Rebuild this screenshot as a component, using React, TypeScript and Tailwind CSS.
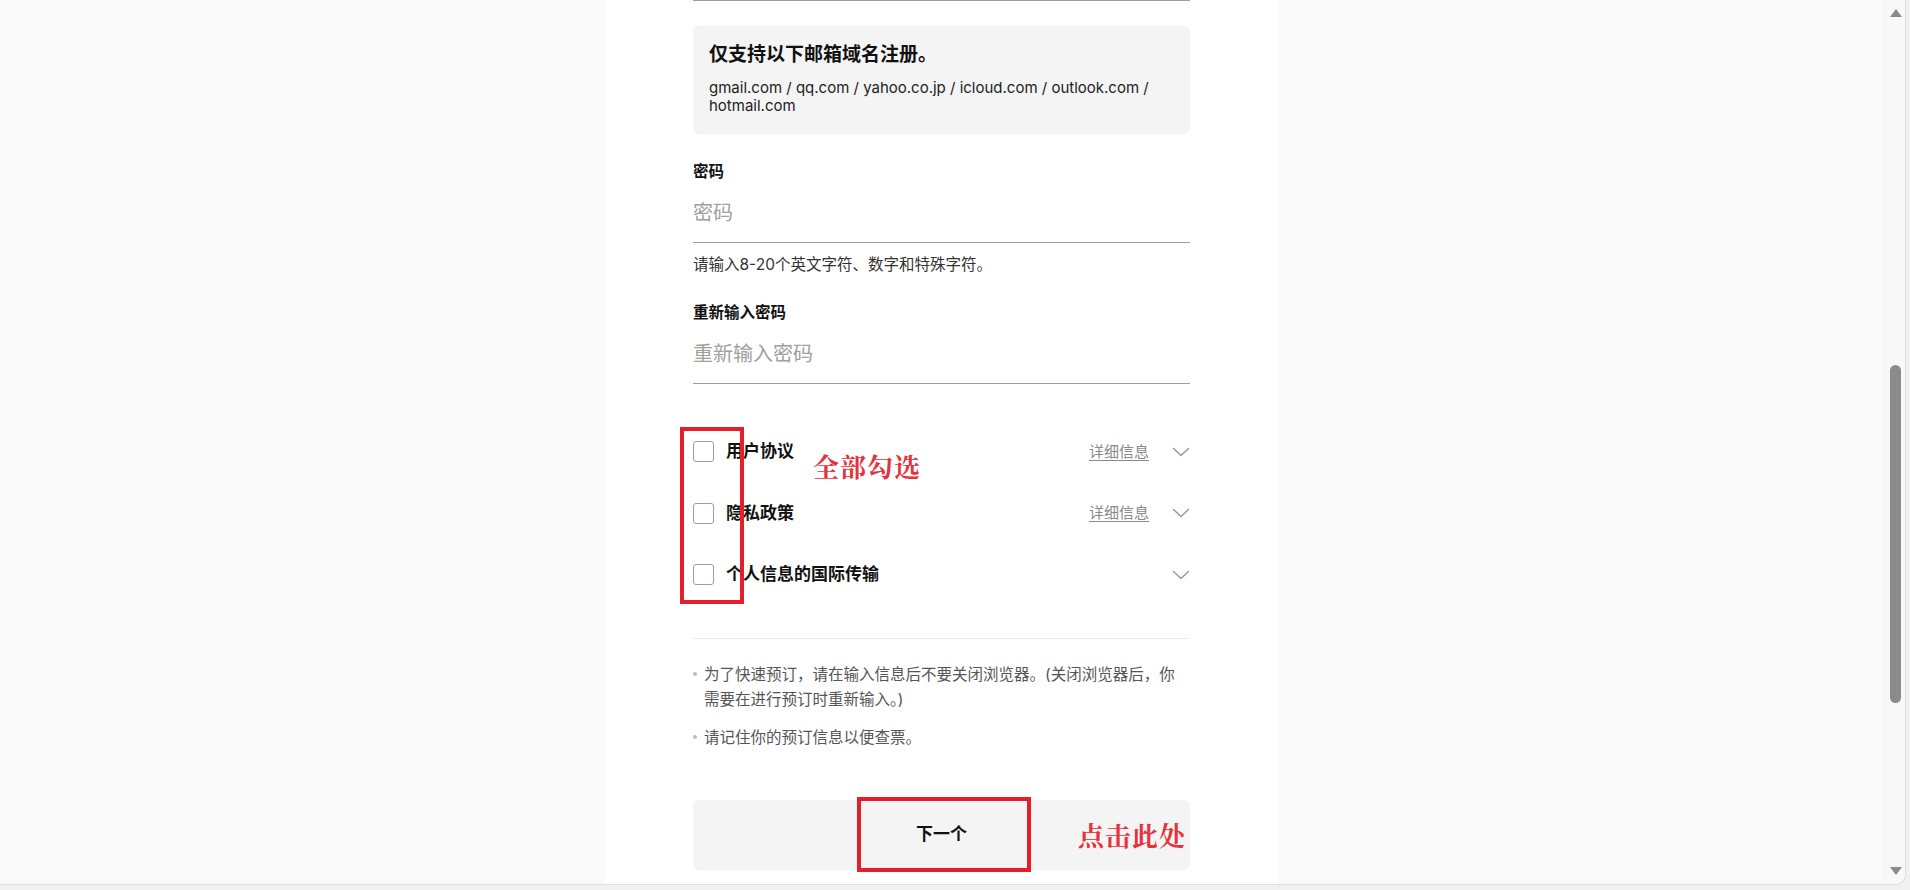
const FONT = 'font-["Inter","Noto_Sans_CJK_SC",sans-serif]'

function Chevron() {
  return (
    <svg width="18" height="10" viewBox="0 0 18 10" fill="none">
      <polyline points="1.5,1.5 9,8.5 16.5,1.5" stroke="#9a9a9a" strokeWidth="1.6" strokeLinecap="round" strokeLinejoin="round" />
    </svg>
  )
}

function AgreeRow({ label, detail }: { label: string; detail?: boolean }) {
  return (
    <div className="flex h-[61.5px] items-center">
      <span className="h-[21px] w-[21px] shrink-0 rounded-[3px] border-[1.5px] border-[#9e9e9e] bg-white" />
      <span className="ml-[12px] text-[17px] font-semibold text-[#111]">{label}</span>
      <div className="ml-auto flex items-center">
        {detail && <span className="text-[15px] text-[#8a8a8a] underline underline-offset-[3px]">详细信息</span>}
        <span className="ml-[23px]">
          <Chevron />
        </span>
      </div>
    </div>
  )
}

function PasswordField({ label, placeholder }: { label: string; placeholder: string }) {
  return (
    <div>
      <div className="text-[15.5px] font-semibold leading-[22px] text-[#111]">{label}</div>
      <input
        type="password"
        placeholder={placeholder}
        className="block h-[60px] w-full border-b border-[#9e9e9e] bg-transparent text-[20px] text-[#222] outline-none placeholder:text-[#a0a0a0]"
      />
    </div>
  )
}

export default function App() {
  return (
    <div className={`h-[890px] w-full overflow-hidden bg-[#f1f1f1] ${FONT}`}>
      <div className="flex h-[885px] w-[1906px] overflow-hidden rounded-br-[10px] border-b border-r border-[#dedede]">
        <div className="flex flex-1 justify-center bg-[#fafafa]">
          <div className="w-[673px] bg-white px-[88px]">
            <div className="h-px bg-[#9e9e9e]" />

            <div className="mt-[25px] rounded-[6px] bg-[#f4f4f4] px-[16px] pb-[19px] pt-[17px]">
              <div className="text-[19px] font-bold leading-[24px] text-[#111]">仅支持以下邮箱域名注册。</div>
              <div className="mt-[12px] text-[15px] leading-[18px] text-[#222]">
                gmail.com / qq.com / yahoo.co.jp / icloud.com / outlook.com /<br />
                hotmail.com
              </div>
            </div>

            <div className="mt-[27px]">
              <PasswordField label="密码" placeholder="密码" />
            </div>
            <div className="mt-[11px] text-[15.5px] leading-[22px] text-[#333]">请输入8-20个英文字符、数字和特殊字符。</div>

            <div className="mt-[26px]">
              <PasswordField label="重新输入密码" placeholder="重新输入密码" />
            </div>

            <div className="relative mt-[37px]">
              <AgreeRow label="用户协议" detail />
              <AgreeRow label="隐私政策" detail />
              <AgreeRow label="个人信息的国际传输" />
              <div className="absolute left-[-13px] top-[6px] h-[177px] w-[64px] border-[4px] border-[#e61e2a]" />
              <div className='absolute left-[120px] top-[31px] font-["Noto_Serif_CJK_SC","Noto_Sans_CJK_SC",serif] text-[26px] font-bold leading-[28px] tracking-[1px] text-[#e5333b]'>
                全部勾选
              </div>
            </div>

            <div className="mt-[32px] h-px bg-[#ececec]" />

            <ul className="mt-[23px] space-y-[13px] text-[15.5px] leading-[25px] text-[#555]">
              <li className="flex">
                <span className="mr-[7px] mt-[10px] h-[4px] w-[4px] shrink-0 rounded-full bg-[#bdbdbd]" />
                <span>
                  为了快速预订，请在输入信息后不要关闭浏览器。(关闭浏览器后，你<br />
                  需要在进行预订时重新输入。)
                </span>
              </li>
              <li className="flex">
                <span className="mr-[7px] mt-[10px] h-[4px] w-[4px] shrink-0 rounded-full bg-[#bdbdbd]" />
                <span>请记住你的预订信息以便查票。</span>
              </li>
            </ul>

            <div className="relative mt-[50px]">
              <button className="flex h-[70px] w-full items-center justify-center rounded-[6px] bg-[#f4f4f4] text-[17px] font-semibold text-[#111]">
                下一个
              </button>
              <div className="absolute left-[164px] top-[-3px] h-[75px] w-[174px] border-[4px] border-[#e61e2a]" />
              <div className='absolute left-[385px] top-[21px] font-["Noto_Serif_CJK_SC","Noto_Sans_CJK_SC",serif] text-[26px] font-bold leading-[28px] tracking-[1px] text-[#e5333b]'>
                点击此处
              </div>
            </div>
          </div>
        </div>

        <div className="flex w-[22px] flex-col items-center bg-[#f8f8f8] pl-[3px]">
          <svg className="mt-[9px]" width="12" height="8" viewBox="0 0 12 8">
            <polygon points="6,0 12,8 0,8" fill="#8a8a8a" />
          </svg>
          <div className="mt-[348px] h-[338px] w-[11px] rounded-full bg-[#8b8b8b]" />
          <svg className="mb-[9px] mt-auto" width="12" height="8" viewBox="0 0 12 8">
            <polygon points="0,0 12,0 6,8" fill="#8a8a8a" />
          </svg>
        </div>
      </div>
    </div>
  )
}
